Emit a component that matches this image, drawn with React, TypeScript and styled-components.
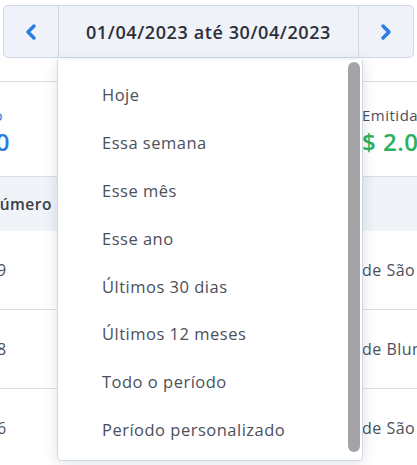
import React from "react";
import styled, {createGlobalStyle} from "styled-components";
import {ChevronLeft, ChevronRight} from "lucide-react";

const GlobalStyle = createGlobalStyle`
  html, body {
    margin: 0;
    padding: 0;
    background: #ffffff;
    font-family: "Open Sans", "DejaVu Sans", sans-serif;
  }
  * { box-sizing: border-box; }
`;

const Page = styled.div`
  position: relative;
  width: 417px;
  height: 465px;
  overflow: hidden;
  background: #fff;
  letter-spacing: 0.5px;
`;

const Toolbar = styled.div`
  padding: 5px 3px 0 3px;
  position: relative;
`;

const RangeGroup = styled.div`
  display: flex;
  height: 53px;
  background: #eff2f8;
  border: 1px solid #cfd8e3;
  border-radius: 5px;
`;

const ArrowButton = styled.button`
  width: 54px;
  flex: 0 0 auto;
  display: flex;
  align-items: center;
  justify-content: center;
  background: transparent;
  border: none;
  color: #2a7de1;
  padding: 0;
`;

const RangeLabel = styled.div`
  flex: 1;
  display: flex;
  align-items: center;
  justify-content: center;
  border-left: 1px solid #cfd8e3;
  border-right: 1px solid #cfd8e3;
  font-size: 18px;
  font-weight: 600;
  color: #2c2f38;
  letter-spacing: 0.6px;
`;

const Menu = styled.div`
  position: absolute;
  top: 60px;
  left: 57px;
  width: 306px;
  height: 401px;
  background: #fff;
  border: 1px solid #cfd8e3;
  border-top: none;
  border-radius: 0 0 5px 5px;
  box-shadow: 0 2px 14px rgba(30, 45, 70, 0.14);
  display: flex;
  z-index: 10;
`;

const MenuList = styled.ul`
  flex: 1;
  list-style: none;
  margin: 0;
  padding: 11px 0 0 0;
`;

const MenuItem = styled.li`
  height: 47.8px;
  display: flex;
  align-items: center;
  padding-left: 44px;
  font-size: 16.5px;
  color: #4b505b;
`;

const ScrollTrack = styled.div`
  width: 12px;
  margin: 2px 2px 8px 0;
  display: flex;
`;

const ScrollThumb = styled.div`
  flex: 1;
  background: #a4a4a8;
  border-radius: 6px;
`;

const Content = styled.div`
  margin-top: 23px;
  border-top: 1px solid #d8dee8;
`;

const Cards = styled.div`
  height: 95px;
  display: flex;
  justify-content: space-between;
  border-bottom: 1px solid #d8dee8;
`;

const Card = styled.div<{$side: "left" | "right"}>`
  display: flex;
  flex-direction: column;
  justify-content: center;
  gap: 0;
  padding-top: 4px;
  flex-shrink: 0;
  width: ${p => (p.$side === "left" ? "120px" : "55px")};
  margin-left: ${p => (p.$side === "left" ? "-110px" : "0")};
  align-items: ${p => (p.$side === "left" ? "flex-end" : "flex-start")};
`;

const CardLabel = styled.div<{$color?: string; $pad?: number}>`
  font-size: 15px;
  color: ${p => p.$color || "#4b505b"};
  white-space: nowrap;
  padding-right: ${p => p.$pad || 0}px;
`;

const CardValue = styled.div<{$color: string}>`
  font-size: 24px;
  font-weight: 600;
  color: ${p => p.$color};
  white-space: nowrap;
`;

const Table = styled.div``;

const HeaderRow = styled.div`
  height: 54px;
  background: #f0f3f8;
  display: flex;
  align-items: center;
  justify-content: space-between;
`;

const HeadCell = styled.div`
  font-size: 15.5px;
  font-weight: 600;
  color: #3a3e48;
  margin-left: -13px;
  white-space: nowrap;
`;

const EmptyHead = styled.div`
  width: 55px;
`;

const Row = styled.div`
  height: 79px;
  display: flex;
  align-items: center;
  justify-content: space-between;
  border-bottom: 1px solid #d8dee8;
`;

const Cell = styled.div<{$shift?: number}>`
  font-size: 16px;
  color: #4b505b;
  white-space: nowrap;
  margin-left: ${p => p.$shift || 0}px;
`;

const CityCell = styled.div`
  width: 55px;
  font-size: 16px;
  color: #4b505b;
  white-space: nowrap;
  overflow: hidden;
`;

const options = [
  "Hoje",
  "Essa semana",
  "Esse mês",
  "Esse ano",
  "Últimos 30 dias",
  "Últimos 12 meses",
  "Todo o período",
  "Período personalizado",
];

const rows = [
  {num: "0029", city: "de São Paulo"},
  {num: "0028", city: "de Blumenau"},
  {num: "0026", city: "de São Paulo"},
];

export default function App() {
  return (
    <Page>
      <GlobalStyle/>
      <Toolbar>
        <RangeGroup>
          <ArrowButton aria-label="anterior">
            <ChevronLeft size={24} strokeWidth={3.5}/>
          </ArrowButton>
          <RangeLabel>01/04/2023 até 30/04/2023</RangeLabel>
          <ArrowButton aria-label="próximo">
            <ChevronRight size={24} strokeWidth={3.5}/>
          </ArrowButton>
        </RangeGroup>
      </Toolbar>
      <Menu>
        <MenuList>
          {options.map(o => <MenuItem key={o}>{o}</MenuItem>)}
        </MenuList>
        <ScrollTrack><ScrollThumb/></ScrollTrack>
      </Menu>
      <Content>
        <Cards>
          <Card $side="left">
            <CardLabel $color="#2a7de1" $pad={7}>Recebido</CardLabel>
            <CardValue $color="#2a7de1">$ 0,00</CardValue>
          </Card>
          <Card $side="right">
            <CardLabel>Emitidas</CardLabel>
            <CardValue $color="#27b35a">$ 2.000,00</CardValue>
          </Card>
        </Cards>
        <Table>
          <HeaderRow>
            <HeadCell>Número</HeadCell>
            <EmptyHead/>
          </HeaderRow>
          {rows.map(r => (
            <Row key={r.num}>
              <Cell $shift={-32}>{r.num}</Cell>
              <CityCell>{r.city}</CityCell>
            </Row>
          ))}
        </Table>
      </Content>
    </Page>
  );
}
